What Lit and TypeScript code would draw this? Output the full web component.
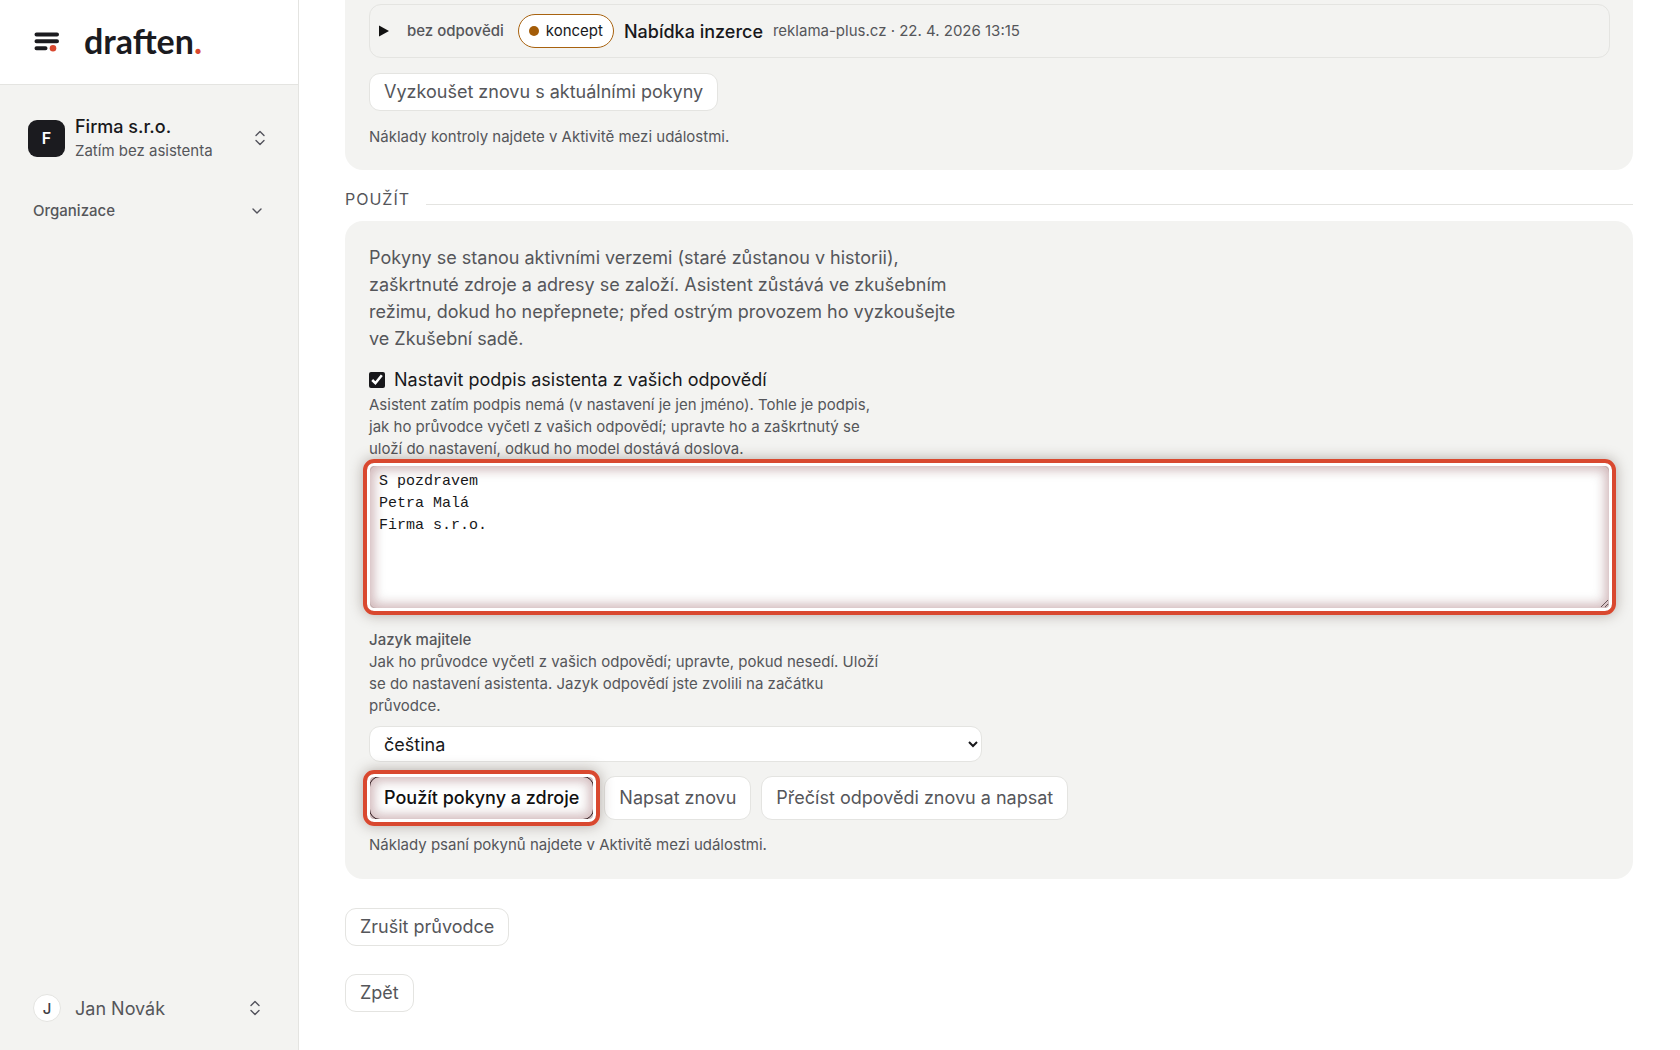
import { LitElement, html, css, svg } from "lit";
import { customElement, state } from "lit/decorators.js";

const sortIcon = html`<svg class="icon" viewBox="0 0 16 16" aria-hidden="true">
  ${svg`<path d="M4 5.6 8 1.6l4 4M4 10.6l4 4 4-4" />`}
</svg>`;
const downIcon = html`<svg class="icon" viewBox="0 0 16 16" aria-hidden="true">
  ${svg`<path d="M4 6l4 4 4-4" />`}
</svg>`;

const sharedStyles = css`
  :host {
    --ink: #18181b;
    --muted: #55565a;
    --soft: #f3f3f1;
    --line: #e4e4e1;
    --accent: #d9482f;
    --small: 15px;
    --body: 18px;
  }
  *,
  *::before,
  *::after {
    box-sizing: border-box;
  }
  p,
  h2 {
    margin: 0;
  }
  button {
    font: inherit;
    color: inherit;
    cursor: pointer;
  }
  .icon {
    width: 16px;
    height: 16px;
    flex: none;
    fill: none;
    stroke: #52525b;
    stroke-width: 1.4;
    stroke-linecap: round;
    stroke-linejoin: round;
  }
`;

@customElement("app-sidebar")
export class AppSidebar extends LitElement {
  static styles = [
    sharedStyles,
    css`
      :host {
        display: flex;
        flex-direction: column;
        background: var(--soft);
        border-right: 1px solid var(--line);
      }
      .brand {
        display: flex;
        align-items: center;
        gap: 23px;
        height: 85px;
        padding: 0 33px;
        background: #fff;
        border-bottom: 1px solid var(--line);
        color: #1b1b1f;
        text-decoration: none;
      }
      .mark {
        width: 28px;
        height: 22px;
      }
      .wordmark {
        font: 700 34px/38px Lato, "Open Sans", sans-serif;
        padding-bottom: 2px;
      }
      .wordmark .dot {
        color: var(--accent);
      }
      .row {
        display: flex;
        align-items: center;
        width: 100%;
        border: 0;
        background: none;
        text-align: left;
      }
      .row .icon {
        margin-left: auto;
      }
      .org {
        gap: 10px;
        margin-top: 29px;
        padding: 0 30px 0 28px;
      }
      .tile {
        display: grid;
        place-items: center;
        width: 37px;
        height: 37px;
        border-radius: 9px;
        background: #1b1b1f;
        color: #fff;
        font-size: 16px;
        font-weight: 600;
      }
      .names {
        display: grid;
      }
      .name {
        font-size: var(--body);
        line-height: 25px;
        font-weight: 500;
        color: var(--ink);
      }
      .sub {
        font-size: var(--small);
        line-height: 23px;
        color: var(--muted);
      }
      .section {
        margin-top: 38px;
        padding: 0 33px;
        font-size: var(--small);
        line-height: 22px;
        font-weight: 500;
        color: var(--muted);
      }
      .user {
        gap: 14px;
        margin-top: auto;
        margin-bottom: 28px;
        padding: 0 35px 0 33px;
        font-size: var(--body);
        color: var(--muted);
      }
      .avatar {
        display: grid;
        place-items: center;
        width: 28px;
        height: 28px;
        border: 1px solid var(--line);
        border-radius: 50%;
        background: #fff;
        font-size: 15px;
        font-weight: 500;
        color: #3f3f46;
      }
    `,
  ];

  render() {
    return html`
      <a class="brand" href="#">
        <svg class="mark" viewBox="0 0 28 22" aria-hidden="true">
          <g stroke="#1b1b1f" stroke-width="4" stroke-linecap="round">
            <path d="M3.500 3.500h20.500M3.500 10.300h20.500M3.500 17.300h9" />
          </g>
          <circle cx="20" cy="17.300" r="3.300" fill="#d9482f" />
        </svg>
        <span class="wordmark">draften<span class="dot">.</span></span>
      </a>
      <button class="row org" type="button">
        <span class="tile">F</span>
        <span class="names">
          <span class="name">Firma s.r.o.</span>
          <span class="sub">Zatím bez asistenta</span>
        </span>
        ${sortIcon}
      </button>
      <button class="row section" type="button" aria-expanded="false">
        Organizace ${downIcon}
      </button>
      <button class="row user" type="button">
        <span class="avatar">J</span>
        <span>Jan Novák</span>
        ${sortIcon}
      </button>
    `;
  }
}

@customElement("app-root")
export class AppRoot extends LitElement {
  @state() private signature = "S pozdravem\nPetra Malá\nFirma s.r.o.";

  static styles = [
    sharedStyles,
    css`
      :host {
        display: grid;
        grid-template-columns: 299px minmax(0, 1fr);
        min-height: 100vh;
        background: #fff;
        color: var(--ink);
        font-family: Inter, "Noto Sans", sans-serif;
        font-size: var(--body);
        line-height: 27px;
      }
      main {
        padding: 0 47px 36px 46px;
      }
      .card {
        padding: 23px 23px 23px 24px;
        border-radius: 18px;
        background: var(--soft);
      }
      .card.trial {
        padding-top: 4px;
        padding-bottom: 22px;
        border-radius: 0 0 18px 18px;
      }
      .mail {
        border: 1px solid var(--line);
        border-radius: 12px;
      }
      .mail summary {
        display: flex;
        align-items: center;
        gap: 10px;
        padding: 9px;
        list-style: none;
        cursor: pointer;
      }
      .mail summary::-webkit-details-marker {
        display: none;
      }
      .caret {
        width: 10px;
        height: 12px;
        margin-right: 8px;
        fill: #111;
      }
      .small {
        font-size: var(--small);
        line-height: 22px;
        color: var(--muted);
      }
      .strong {
        font-weight: 500;
      }
      .badge {
        display: flex;
        align-items: center;
        gap: 7px;
        margin-left: 4px;
        padding: 5px 10px;
        border: 1px solid #a8620f;
        border-radius: 17px;
        background: #fff;
        font-size: var(--small);
        line-height: 22px;
      }
      .badge::before {
        content: "";
        width: 10px;
        height: 10px;
        border-radius: 50%;
        background: #a35c08;
      }
      .btn {
        padding: 5px 14px;
        border: 1px solid var(--line);
        border-radius: 11px;
        background: #fff;
        color: var(--muted);
        line-height: 26px;
      }
      .mail + .btn {
        display: block;
        margin: 15px 0;
      }
      .divider {
        display: flex;
        align-items: center;
        gap: 16px;
        padding: 18px 0 10px;
        font-size: 16px;
        line-height: 23px;
        font-weight: 400;
        letter-spacing: 1px;
        color: var(--muted);
      }
      .divider::after {
        content: "";
        flex: 1;
        height: 1px;
        margin-top: 10px;
        background: var(--line);
      }
      .lead {
        max-width: 590px;
        color: var(--muted);
      }
      .check {
        display: flex;
        align-items: center;
        gap: 9px;
        margin: 14px 0 1px;
      }
      .check input {
        width: 16px;
        height: 16px;
        margin: 0;
        accent-color: #18181b;
      }
      .hint {
        max-width: 525px;
      }
      .spot {
        position: relative;
        display: block;
      }
      .hint + .spot {
        margin-top: 5px;
      }
      .spot::after {
        content: "";
        position: absolute;
        inset: -6px;
        border: 4px solid var(--accent);
        border-radius: 11px;
        box-shadow:
          0 0 14px rgba(60, 40, 30, 0.35),
          inset 0 0 0 3px #fff,
          inset 0 0 10px 7px rgba(170, 50, 60, 0.18),
          inset 0 0 14px 6px rgba(40, 20, 20, 0.18);
        pointer-events: none;
      }
      textarea {
        display: block;
        width: 100%;
        padding: 5px 9px;
        border: 1px solid var(--line);
        border-radius: 8px;
        background: #fff;
        color: var(--ink);
        font: 15px/22px "Liberation Mono", monospace;
        resize: vertical;
      }
      .field {
        display: block;
        margin-top: 20px;
      }
      select {
        display: block;
        width: 50%;
        max-width: 613px;
        height: 36px;
        margin-top: 9px;
        padding: 0 10px;
        border: 1px solid var(--line);
        border-radius: 11px;
        background: #fff;
        color: var(--ink);
        font: inherit;
      }
      .actions {
        display: flex;
        flex-wrap: wrap;
        gap: 10px;
        margin: 14px 0;
      }
      .actions .btn {
        padding: 8px 14px;
      }
      .actions .primary {
        border-color: #18181b;
        color: #111;
        font-weight: 500;
      }
      .footer {
        display: grid;
        justify-items: start;
        gap: 28px;
        margin-top: 29px;
      }
    `,
  ];

  private onInput(e: Event) {
    this.signature = (e.target as HTMLTextAreaElement).value;
  }

  render() {
    return html`
      <app-sidebar></app-sidebar>
      <main>
        <section class="card trial">
          <details class="mail">
            <summary>
              <svg class="caret" viewBox="0 0 10 12" aria-hidden="true">
                <path d="M0 0.500 10 6 0 11.500z" />
              </svg>
              <span class="small strong">bez odpovědi</span>
              <span class="badge">koncept</span>
              <span class="strong">Nabídka inzerce</span>
              <span class="small">reklama-plus.cz · 22. 4. 2026 13:15</span>
            </summary>
          </details>
          <button class="btn" type="button">Vyzkoušet znovu s aktuálními pokyny</button>
          <p class="small">Náklady kontroly najdete v Aktivitě mezi událostmi.</p>
        </section>

        <h2 class="divider">POUŽÍT</h2>

        <section class="card">
          <p class="lead">
            Pokyny se stanou aktivními verzemi (staré zůstanou v historii), zaškrtnuté zdroje a
            adresy se založí. Asistent zůstává ve zkušebním režimu, dokud ho nepřepnete; před
            ostrým provozem ho vyzkoušejte ve Zkušební sadě.
          </p>
          <label class="check">
            <input type="checkbox" checked />
            Nastavit podpis asistenta z vašich odpovědí
          </label>
          <p class="small hint" id="signature-hint">
            Asistent zatím podpis nemá (v nastavení je jen jméno). Tohle je podpis, jak ho
            průvodce vyčetl z vašich odpovědí; upravte ho a zaškrtnutý se uloží do nastavení,
            odkud ho model dostává doslova.
          </p>
          <div class="spot">
            <textarea
              rows="6"
              aria-labelledby="signature-hint"
              spellcheck="false"
              .value=${this.signature}
              @input=${this.onInput}
            ></textarea>
          </div>
          <label class="small strong field" for="language">Jazyk majitele</label>
          <p class="small hint">
            Jak ho průvodce vyčetl z vašich odpovědí; upravte, pokud nesedí. Uloží se do
            nastavení asistenta. Jazyk odpovědí jste zvolili na začátku průvodce.
          </p>
          <select id="language">
            <option>čeština</option>
          </select>
          <div class="actions">
            <span class="spot">
              <button class="btn primary" type="button">Použít pokyny a zdroje</button>
            </span>
            <button class="btn" type="button">Napsat znovu</button>
            <button class="btn" type="button">Přečíst odpovědi znovu a napsat</button>
          </div>
          <p class="small">Náklady psaní pokynů najdete v Aktivitě mezi událostmi.</p>
        </section>

        <div class="footer">
          <button class="btn" type="button">Zrušit průvodce</button>
          <button class="btn" type="button">Zpět</button>
        </div>
      </main>
    `;
  }
}
